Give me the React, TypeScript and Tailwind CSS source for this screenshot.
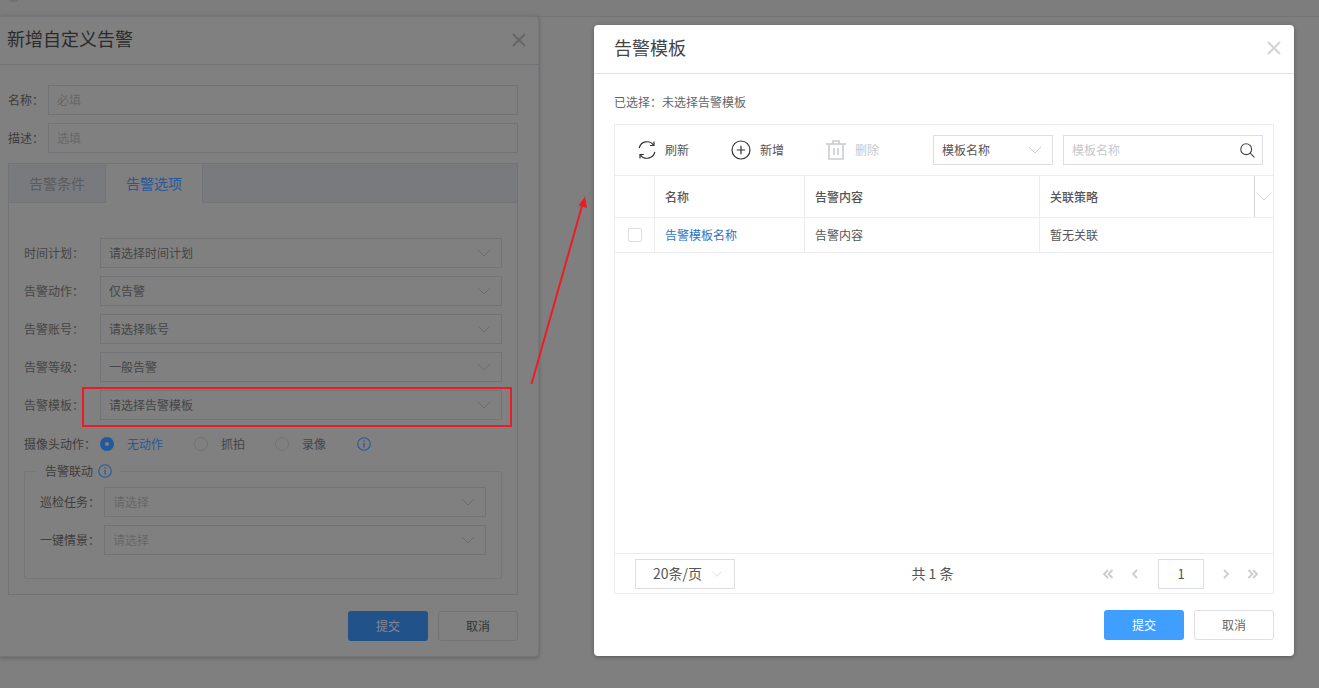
import React from 'react';

const Chevron = ({ color = '#6a6b70', className = '' }: { color?: string; className?: string }) => (
  <svg width="14" height="8" viewBox="0 0 14 8" fill="none" className={className}>
    <path d="M1 1l6 6 6-6" stroke={color} strokeWidth="1" />
  </svg>
);

const InfoIcon = () => (
  <svg width="14" height="14" viewBox="0 0 14 14" fill="none">
    <circle cx="7" cy="7" r="6.3" stroke="#26599a" strokeWidth="1.1" />
    <path d="M7 6v4.4" stroke="#26599a" strokeWidth="1.3" />
    <path d="M7 3.2v1.5" stroke="#26599a" strokeWidth="1.3" />
  </svg>
);

const CloseIcon = ({ color }: { color: string }) => (
  <svg width="14" height="14" viewBox="0 0 14 14" fill="none">
    <path d="M1 1l12 12M13 1L1 13" stroke={color} strokeWidth="2.2" />
  </svg>
);

const DimSelect = ({ label, value, muted }: { label: string; value: string; muted?: boolean }) => (
  <div className="flex items-center h-[30px]">
    <span className={muted ? 'w-[64px] pl-0 text-[#3d3d3d] shrink-0' : 'w-[76px] text-[#454545] shrink-0'}>{label}</span>
    <div className="flex-1 h-[30px] border border-[#727377] flex items-center justify-between pl-2 pr-[10px]">
      <span className={muted ? 'text-[#666769]' : 'text-[#454545]'}>{value}</span>
      <Chevron />
    </div>
  </div>
);

const Radio = ({ text, checked, className }: { text: string; checked?: boolean; className: string }) => (
  <div className={'flex items-center ' + className}>
    {checked ? (
      <span className="w-[14px] h-[14px] rounded-full bg-[#215a9c] flex items-center justify-center mr-[13px]">
        <span className="w-1 h-1 rounded-full bg-[#808080]"></span>
      </span>
    ) : (
      <span className="w-[14px] h-[14px] rounded-full border border-[#727377] mr-[13px]"></span>
    )}
    <span className={checked ? 'text-[#26599a]' : 'text-[#454545]'}>{text}</span>
  </div>
);

// dimmed dialog behind the overlay
const CustomAlarmDialog = () => (
  <div className="relative w-[539px] h-[641px] mt-4 shrink-0 bg-[#808080] border-t border-r border-b border-[#75767a] rounded-r-[4px] shadow-[0_1px_4px_rgba(0,0,0,0.25)]">
    <div className="h-[48px] border-b border-[#727377] flex items-center justify-between pl-[7px] pr-3">
      <span className="text-[18px] text-[#2b2b2b] pb-1">新增自定义告警</span>
      <span className="pb-[2px]">
        <CloseIcon color="#666769" />
      </span>
    </div>
    <div className="pl-2 pr-5 pt-5">
      <div className="flex items-center h-[30px]">
        <span className="w-10 shrink-0 text-[#3d3d3d]">名称：</span>
        <div className="flex-1 h-[30px] border border-[#727377] pl-2 flex items-center text-[#666769]">必填</div>
      </div>
      <div className="flex items-center h-[30px] mt-2">
        <span className="w-10 shrink-0 text-[#3d3d3d]">描述：</span>
        <div className="flex-1 h-[30px] border border-[#727377] pl-2 flex items-center text-[#666769]">选填</div>
      </div>
      <div className="mt-[10px] h-[432px] border border-[#727377]">
        <div className="flex h-[39px] bg-[#797a7e] border-b border-[#727377]">
          <div className="w-[97px] -mb-px border-r border-[#727377] flex items-center pl-5 text-[14px] text-[#5b5c5f]">告警条件</div>
          <div className="w-[97px] -mb-px h-[39px] bg-[#808080] border-r border-[#727377] flex items-center pl-[20px] text-[14px] text-[#27589a]">告警选项</div>
        </div>
        <div className="pl-[15px] pr-[15px] pt-[35px]">
          <div className="flex flex-col gap-2">
            <DimSelect label="时间计划：" value="请选择时间计划" />
            <DimSelect label="告警动作：" value="仅告警" />
            <DimSelect label="告警账号：" value="请选择账号" />
            <DimSelect label="告警等级：" value="一般告警" />
            <DimSelect label="告警模板：" value="请选择告警模板" />
          </div>
          <div className="flex items-center h-[14px] mt-[17px]">
            <span className="w-[76px] shrink-0 text-[#3d3d3d] whitespace-nowrap">摄像头动作：</span>
            <Radio text="无动作" checked className="w-[94px]" />
            <Radio text="抓拍" className="w-[81px]" />
            <Radio text="录像" className="w-[82px]" />
            <InfoIcon />
          </div>
          <div className="relative mt-[20px] h-[108px] border border-[#76777a] rounded-[2px] pl-[15px] pr-[15px] pt-[15px]">
            <div className="absolute left-[12px] -top-[9px] h-[16px] bg-[#808080] flex items-center gap-[5px] px-2 text-[#3d3d3d]">
              告警联动 <InfoIcon />
            </div>
            <div className="flex flex-col gap-2">
              <DimSelect label="巡检任务：" value="请选择" muted />
              <DimSelect label="一键情景：" value="请选择" muted />
            </div>
          </div>
        </div>
      </div>
      <div className="flex justify-end gap-[10px] mt-4">
        <div className="w-20 h-[30px] rounded-[3px] bg-[#21528a] text-[#85898f] flex items-center justify-center">提交</div>
        <div className="w-20 h-[30px] rounded-[3px] border border-[#727377] text-[#333] flex items-center justify-center">取消</div>
      </div>
    </div>
  </div>
);

const RefreshIcon = () => (
  <svg width="20" height="20" viewBox="0 0 20 20" fill="none" stroke="#333" strokeWidth="1.2">
    <path d="M16.6 5.2A8 8 0 0 0 2.2 8.2" />
    <path d="M17 1.6v3.9h-3.9" />
    <path d="M3.4 14.8a8 8 0 0 0 14.4-3" />
    <path d="M3 18.4v-3.9h3.9" />
  </svg>
);

const PlusIcon = () => (
  <svg width="20" height="20" viewBox="0 0 20 20" fill="none" stroke="#333" strokeWidth="1.2">
    <circle cx="10" cy="10" r="9" />
    <path d="M10 5.8v8.4M5.8 10h8.4" />
  </svg>
);

const TrashIcon = () => (
  <svg width="20" height="20" viewBox="0 0 20 20" fill="none" stroke="#c9ccd3" strokeWidth="1.6">
    <path d="M0 4h20" />
    <path d="M7 4V1h6v3" />
    <path d="M3 4v15h14V4" />
    <path d="M8 8v7M12 8v7" />
  </svg>
);

const SearchIcon = () => (
  <svg width="15" height="15" viewBox="0 0 15 15" fill="none" stroke="#444" strokeWidth="1.1">
    <circle cx="6.2" cy="6.2" r="5.4" />
    <path d="M10.2 10.2l4.2 4.2" />
  </svg>
);

const PagerArrow = ({ double, right }: { double?: boolean; right?: boolean }) => (
  <svg width="12" height="10" viewBox="0 0 12 10" fill="none" stroke="#c9ccd3" strokeWidth="1.8" className={right ? 'rotate-180' : ''}>
    {double ? <path d="M6 1L2 5l4 4M10.5 1l-4 4 4 4" /> : <path d="M8 1L4 5l4 4" />}
  </svg>
);

const TemplateDialog = () => (
  <div className="relative w-[700px] h-[631px] mt-[25px] ml-[55px] shrink-0 bg-white rounded-[4px] shadow-[0_1px_4px_rgba(0,0,0,0.3)]">
    <div className="h-[49px] border-b border-[#e2e3ea] flex items-center justify-between pl-5 pr-[13px]">
      <span className="text-[18px] text-[#444] pb-1">告警模板</span>
      <span className="pb-[2px]">
        <CloseIcon color="#d3d4d6" />
      </span>
    </div>
    <div className="px-5 pt-[21px]">
      <div className="h-[14px] flex items-center text-[#666]">已选择：未选择告警模板</div>
      <div className="mt-[15px] h-[470px] border border-[#ececf2] flex flex-col">
        <div className="h-[50px] shrink-0 flex items-center pl-[22px] pr-[10px]">
          <RefreshIcon />
          <span className="ml-2 w-[66px] text-[#555]">刷新</span>
          <PlusIcon />
          <span className="ml-[9px] w-[66px] text-[#555]">新增</span>
          <TrashIcon />
          <span className="ml-[9px] text-[#c5c8ce]">删除</span>
          <div className="ml-[54px] w-[120px] h-[30px] border border-[#dcdde6] flex items-center justify-between pl-2 pr-[10px]">
            <span className="text-[#555]">模板名称</span>
            <Chevron color="#cdd0d6" />
          </div>
          <div className="ml-[10px] flex-1 h-[30px] border border-[#dcdde6] flex items-center justify-between pl-2 pr-[7px]">
            <span className="text-[#c5c8ce]">模板名称</span>
            <SearchIcon />
          </div>
        </div>
        <div className="h-[43px] shrink-0 flex border-t border-b border-[#ececf2] font-medium text-[#555]">
          <div className="w-10 border-r border-[#ececf2]"></div>
          <div className="w-[150px] border-r border-[#ececf2] flex items-center pl-[10px]">名称</div>
          <div className="w-[235px] border-r border-[#ececf2] flex items-center pl-[10px]">告警内容</div>
          <div className="w-[215px] border-r border-[#d5d6dc] flex items-center pl-[10px]">关联策略</div>
          <div className="flex-1 flex items-center justify-center">
            <Chevron color="#cdd0d6" />
          </div>
        </div>
        <div className="h-[35px] shrink-0 flex border-b border-[#ececf2] text-[#555]">
          <div className="w-10 border-r border-[#ececf2] flex items-center justify-center">
            <span className="w-[14px] h-[14px] border border-[#dcdde6] rounded-[2px]"></span>
          </div>
          <div className="w-[150px] border-r border-[#ececf2] flex items-center pl-[10px] text-[#2c72c9]">告警模板名称</div>
          <div className="w-[235px] border-r border-[#ececf2] flex items-center pl-[10px]">告警内容</div>
          <div className="flex-1 flex items-center pl-[10px]">暂无关联</div>
        </div>
        <div className="flex-1"></div>
        <div className="h-[40px] shrink-0 border-t border-[#ececf2] flex items-center pl-5 pr-[14px] text-[14px] text-[#555]">
          <div className="w-[100px] h-[30px] border border-[#dcdde6] flex items-center justify-between pl-[17px] pr-[10px]">
            <span>20条/页</span>
            <Chevron color="#cdd0d6" className="scale-75" />
          </div>
          <div className="flex-1 flex justify-center gap-[3px] pl-[28px]">
            <span>共</span>
            <span>1</span>
            <span>条</span>
          </div>
          <div className="flex items-center">
            <PagerArrow double />
            <span className="w-[15px]"></span>
            <PagerArrow />
            <div className="ml-[17px] mr-[16px] w-[46px] h-[30px] border border-[#dcdde6] flex items-center justify-center text-[13px]">1</div>
            <PagerArrow right />
            <span className="w-[15px]"></span>
            <PagerArrow double right />
          </div>
        </div>
      </div>
      <div className="flex justify-end gap-[10px] mt-4">
        <div className="w-20 h-[30px] rounded-[3px] bg-[#409eff] text-white flex items-center justify-center">提交</div>
        <div className="w-20 h-[30px] rounded-[3px] border border-[#dcdfe6] text-[#666] flex items-center justify-center">取消</div>
      </div>
    </div>
  </div>
);

export default function App() {
  return (
    <div className="relative w-[1319px] h-[688px] overflow-hidden bg-[#7f7f7f] flex items-start text-[12px] font-['Noto_Sans_CJK_SC','Noto_Sans',sans-serif]">
      {/* page header strip behind the dialogs */}
      <div className="absolute left-0 top-0 w-full h-[17px] bg-[#7d7d7d] border-b border-[#747474]">
        <div className="ml-[9px] w-[9px] h-[3px] -mt-px rounded-b-full bg-[#707070]"></div>
      </div>
      <CustomAlarmDialog />
      <TemplateDialog />
      {/* annotation drawn on top of the screenshot */}
      <div className="absolute left-[82px] top-[387px] w-[430px] h-[40px] border-2 border-[#ed1c24]"></div>
      <svg width="70" height="200" viewBox="0 0 70 200" fill="none" className="absolute left-[525px] top-[190px]">
        <path d="M6.5 194L57 16" stroke="#ed1c24" strokeWidth="2" />
        <path d="M60 6.5L62 18 53.5 15.5z" fill="#ed1c24" />
      </svg>
    </div>
  );
}
